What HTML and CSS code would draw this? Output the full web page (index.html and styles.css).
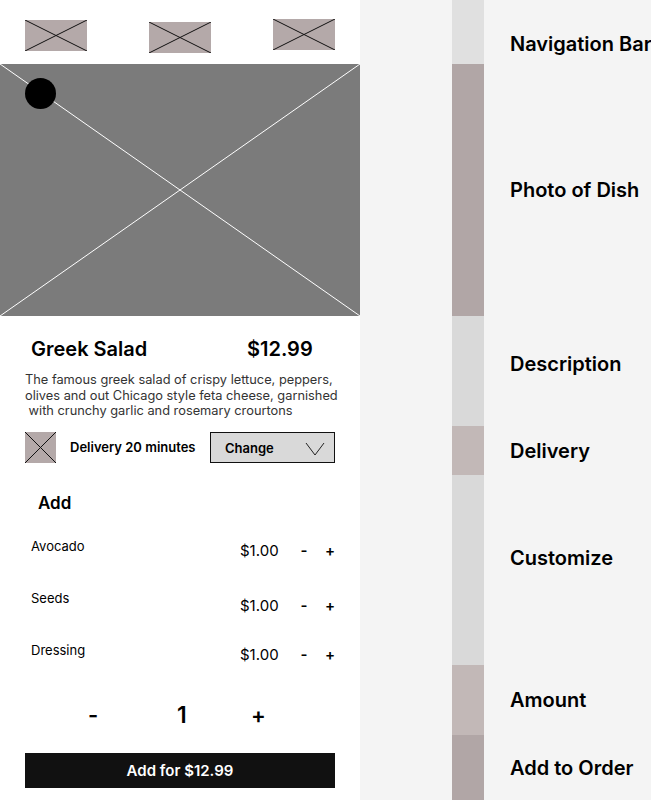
FILE: index.html
```html
<!DOCTYPE html>
<html>
<head>
<meta charset="utf-8">
<link rel="stylesheet" href="styles.css">
</head>
<body>
<div class="page">
  <div class="phone">
    <div class="nav">
      <svg class="ph ph-1" viewBox="0 0 62 31" preserveAspectRatio="none"><line x1="0" y1="0" x2="62" y2="31"/><line x1="0" y1="31" x2="62" y2="0"/></svg>
      <svg class="ph ph-2" viewBox="0 0 62 31" preserveAspectRatio="none"><line x1="0" y1="0" x2="62" y2="31"/><line x1="0" y1="31" x2="62" y2="0"/></svg>
      <svg class="ph ph-3" viewBox="0 0 62 31" preserveAspectRatio="none"><line x1="0" y1="0" x2="62" y2="31"/><line x1="0" y1="31" x2="62" y2="0"/></svg>
    </div>
    <div class="photo">
      <svg class="photo-x" viewBox="0 0 360 252" preserveAspectRatio="none"><line x1="0" y1="0" x2="360" y2="252"/><line x1="0" y1="252" x2="360" y2="0"/></svg>
      <div class="back-dot"></div>
    </div>
    <div class="details">
      <div class="title-row">
        <div class="title">Greek Salad</div>
        <div class="price">$12.99</div>
      </div>
      <p class="desc">The famous greek salad of crispy lettuce, peppers,<br>olives and out Chicago style feta cheese, garnished<br>&nbsp;with crunchy garlic and rosemary crourtons</p>
      <div class="delivery">
        <svg class="ph ph-sq" viewBox="0 0 31 31" preserveAspectRatio="none"><line x1="0" y1="0" x2="31" y2="31"/><line x1="0" y1="31" x2="31" y2="0"/></svg>
        <div class="delivery-text">Delivery 20 minutes</div>
        <div class="select">
          <span>Change</span>
          <svg class="chev" viewBox="0 0 20 14"><polyline points="1,1 10,13 19,1"/></svg>
        </div>
      </div>
      <div class="add-title">Add</div>
      <div class="item">
        <div class="item-name">Avocado</div>
        <div class="item-price">$1.00</div>
        <div class="item-ctrl">-</div>
        <div class="item-ctrl plus">+</div>
      </div>
      <div class="item">
        <div class="item-name">Seeds</div>
        <div class="item-price low">$1.00</div>
        <div class="item-ctrl low">-</div>
        <div class="item-ctrl plus low">+</div>
      </div>
      <div class="item">
        <div class="item-name">Dressing</div>
        <div class="item-price">$1.00</div>
        <div class="item-ctrl">-</div>
        <div class="item-ctrl plus">+</div>
      </div>
      <div class="amount">
        <span class="amt-btn">-</span>
        <span class="amt-num">1</span>
        <span class="amt-btn">+</span>
      </div>
      <div class="order-btn">Add for $12.99</div>
    </div>
  </div>
  <div class="legend">
    <div class="lrow r-nav"><div class="band b-nav"></div><div class="label">Navigation Bar</div></div>
    <div class="lrow r-photo"><div class="band b-dark"></div><div class="label">Photo of Dish</div></div>
    <div class="lrow r-desc"><div class="band b-light"></div><div class="label">Description</div></div>
    <div class="lrow r-deliv"><div class="band b-mid"></div><div class="label">Delivery</div></div>
    <div class="lrow r-cust"><div class="band b-light"></div><div class="label">Customize</div></div>
    <div class="lrow r-amt"><div class="band b-mid"></div><div class="label">Amount</div></div>
    <div class="lrow r-order"><div class="band b-dark"></div><div class="label">Add to Order</div></div>
  </div>
</div>
</body>
</html>
```

FILE: styles.css
```css
* { box-sizing: border-box; }
html, body { margin: 0; padding: 0; }
body {
  background: #f4f4f4;
  font-family: Inter, "Noto Sans", sans-serif;
  color: #000;
  overflow: hidden;
}
.page {
  display: flex;
  width: 651px;
  height: 800px;
}
.phone {
  width: 360px;
  flex: none;
  background: #fff;
  height: 800px;
}
.nav {
  height: 64px;
  display: flex;
  justify-content: space-between;
  align-items: flex-start;
  padding: 0 25px;
}
.ph {
  display: block;
  width: 62px;
  height: 31px;
  background: #b4a9a9;
}
.ph line {
  stroke: #111;
  stroke-width: 1;
  vector-effect: non-scaling-stroke;
}
.ph-1 { margin-top: 20px; }
.ph-2 { margin-top: 22px; }
.ph-3 { margin-top: 19px; }
.photo {
  position: relative;
  height: 252px;
  background: #7b7b7b;
}
.photo-x {
  display: block;
  width: 360px;
  height: 252px;
}
.photo-x line {
  stroke: #fff;
  stroke-width: 1;
}
.back-dot {
  position: absolute;
  left: 25px;
  top: 14px;
  width: 31px;
  height: 31px;
  border-radius: 50%;
  background: #000;
}
.details {
  padding: 0 25px;
}
.title-row {
  display: grid;
  grid-template-columns: 216px auto;
  margin-top: 21px;
  padding-left: 6px;
  font-size: 20px;
  font-weight: 600;
  line-height: 24px;
}
.desc {
  margin: 11px 0 0;
  font-size: 12.8px;
  line-height: 15.5px;
  color: #333;
  white-space: nowrap;
}
.delivery {
  display: flex;
  align-items: center;
  margin-top: 13px;
  height: 31px;
}
.ph-sq {
  width: 31px;
  height: 31px;
}
.delivery-text {
  margin-left: 14px;
  font-size: 13px;
  font-weight: 600;
  width: 140px;
}
.select {
  position: relative;
  width: 125px;
  height: 31px;
  background: #d9d9d9;
  border: 1px solid #111;
  display: flex;
  align-items: center;
  padding-left: 14px;
  font-size: 13px;
  font-weight: 600;
  padding-top: 2px;
}
.chev {
  position: absolute;
  left: 94px;
  top: 9px;
  width: 20px;
  height: 14px;
}
.chev polyline {
  fill: none;
  stroke: #222;
  stroke-width: 1;
}
.add-title {
  margin-top: 29px;
  padding-left: 13px;
  font-size: 17px;
  font-weight: 600;
  line-height: 22px;
}
.item {
  display: flex;
  align-items: flex-start;
  height: 52px;
  padding-left: 6px;
  font-size: 13px;
  line-height: 16px;
}
.add-title + .item { margin-top: 24px; }
.item-name {
  flex: 1;
}
.item-price {
  margin-top: 5px;
  font-size: 15px;
  width: 40px;
}
.item-ctrl {
  margin-top: 5px;
  font-size: 15px;
  font-weight: 600;
  width: 10px;
  text-align: center;
  margin-left: 19px;
}
.item-ctrl.plus { margin-left: 16px; }
.low { margin-top: 8px; }
.amount {
  display: grid;
  grid-template-columns: 89px 74px 60px;
  margin-top: 6px;
  padding-left: 63px;
  height: 30px;
  line-height: 30px;
  font-size: 22px;
  font-weight: 600;
}
.amt-num { font-size: 23px; }
.order-btn {
  margin-top: 23px;
  height: 35px;
  background: #111;
  color: #fff;
  font-size: 15px;
  font-weight: 600;
  display: flex;
  align-items: center;
  justify-content: center;
}
.legend {
  margin-left: 92px;
  display: flex;
  flex-direction: column;
  flex: 1;
}
.lrow {
  display: flex;
  align-items: flex-start;
}
.band {
  width: 32px;
  height: 100%;
  flex: none;
}
.label {
  margin-left: 26px;
  font-size: 20px;
  font-weight: 600;
  line-height: 24px;
  white-space: nowrap;
}
.b-nav { background: #e0e0e0; }
.b-dark { background: #b1a6a6; }
.b-light { background: #d9d9d9; }
.b-mid { background: #c2b8b7; }
.r-nav { height: 64px; }
.r-nav .label { padding-top: 32px; }
.r-photo { height: 252px; }
.r-photo .label { padding-top: 114px; }
.r-desc { height: 110px; }
.r-desc .label { padding-top: 36px; }
.r-deliv { height: 49px; }
.r-deliv .label { padding-top: 13px; }
.r-cust { height: 190px; }
.r-cust .label { padding-top: 71px; }
.r-amt { height: 70px; }
.r-amt .label { padding-top: 23px; }
.r-order { height: 65px; }
.r-order .label { padding-top: 21px; }
```
